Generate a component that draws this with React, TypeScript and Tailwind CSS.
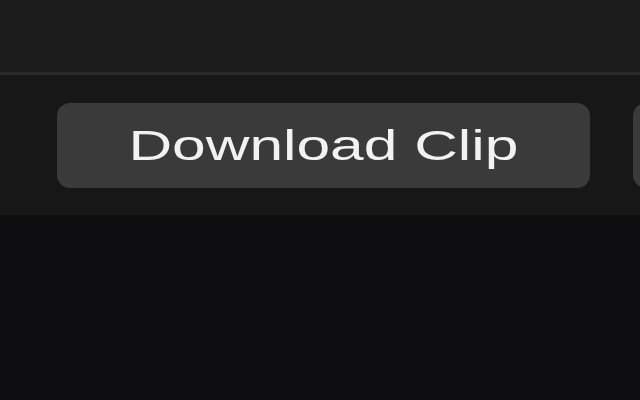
export default function App() {
  return (
    <div className="w-[640px] h-[400px] overflow-hidden bg-[#0e0e10] font-['Liberation_Sans',Arial,sans-serif]">
      <div className="h-[75px] bg-[#1b1b1c] border-b-[3px] border-[#2a2a2b]" />
      <div className="h-[140px] bg-[#171718] flex items-start gap-[43px] pl-[57px] pt-[28px] overflow-hidden">
        <button className="shrink-0 w-[533px] h-[85px] rounded-[13px] bg-[#3a3a3b] flex items-center justify-center">
          <span className="inline-block scale-x-[1.44] text-[42px] leading-none text-[#f2f2f2] whitespace-nowrap">
            Download Clip
          </span>
        </button>
        <button className="shrink-0 w-[120px] h-[85px] rounded-[13px] bg-[#3a3a3b]" />
      </div>
    </div>
  );
}
